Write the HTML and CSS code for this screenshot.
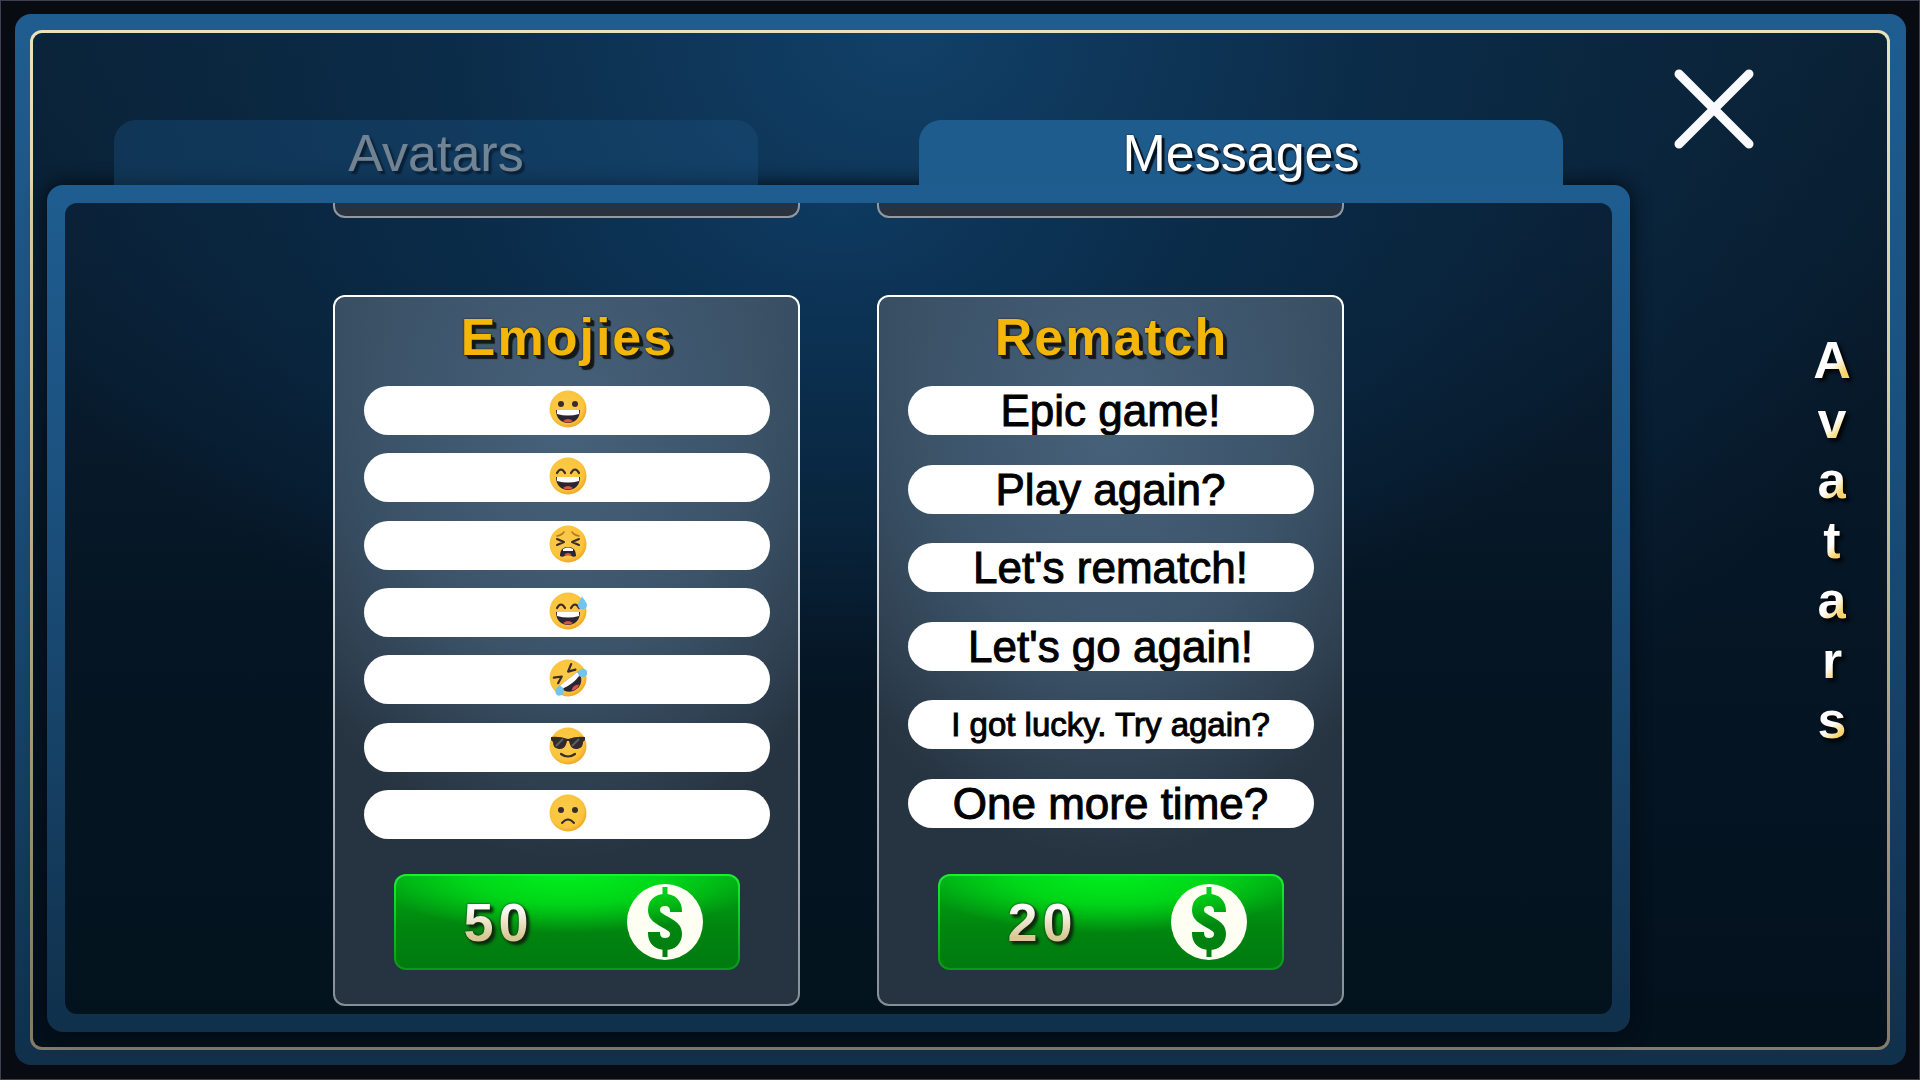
FILE: index.html
```html
<!DOCTYPE html>
<html lang="en">
<head>
  <meta charset="UTF-8">
  <meta name="viewport" content="width=device-width, initial-scale=1.0">
  <title>Avatars</title>
  <link rel="stylesheet" href="styles.css">
</head>
<body>
  <!-- shared drawings -->
  <svg class="defs" aria-hidden="true">
    <defs>
      <radialGradient id="skin" cx="45%" cy="42%" r="58%">
        <stop offset="0" stop-color="#fccb4b"/>
        <stop offset="0.8" stop-color="#fac43c"/>
        <stop offset="1" stop-color="#f0a727"/>
      </radialGradient>
      <mask id="dollar">
        <circle cx="38" cy="38" r="38" fill="#fff"/>
        <path d="M49 28V27C49 20 45 16 38 16S27 20 27 26C27 32 31 34 38 38S49 44 49 50C49 56 45 60 38 60S27 56 27 49V48" fill="none" stroke="#000" stroke-width="12"/>
        <path d="M38 3V16M38 60V73" stroke="#000" stroke-width="5"/>
      </mask>
      <symbol id="coin" viewBox="0 0 76 76">
        <rect width="76" height="76" fill="#fffef2" mask="url(#dollar)"/>
      </symbol>
      <symbol id="grin" viewBox="0 0 38 38">
        <path d="M7 20H31C31 28 26 33 19 33S7 28 7 20Z" fill="#2b2433"/>
        <path d="M8 20H30V24Q19 27 8 24Z" fill="#fff"/>
        <path d="M14 31Q19 27 24 31Q19 34 14 31Z" fill="#d4573f"/>
      </symbol>
      <symbol id="happyEyes" viewBox="0 0 38 38">
        <path d="M8 16Q12 9 16 16M22 16Q26 9 30 16" fill="none" stroke="#3a2c2e" stroke-width="2.2" stroke-linecap="round"/>
      </symbol>
    </defs>
  </svg>

  <div class="window">
    <div class="inner">
      <main class="shop">
        <div class="tabs" role="tablist">
          <button class="tab" role="tab" aria-selected="false">Avatars</button>
          <button class="tab active" role="tab" aria-selected="true">Messages</button>
        </div>
        <div class="panel">
          <div class="scroller">
            <div class="card-end"></div>
            <div class="card-end"></div>

            <section class="card">
              <h2>Emojies</h2>
              <ul class="messages emojis">
                <li>
                  <svg viewBox="0 0 38 38" role="img" aria-label="grinning">
                    <circle cx="19" cy="19" r="18.5" fill="url(#skin)"/>
                    <circle cx="12" cy="14" r="3" fill="#3a2c2e"/>
                    <circle cx="26" cy="14" r="3" fill="#3a2c2e"/>
                    <use href="#grin"/>
                  </svg>
                </li>
                <li>
                  <svg viewBox="0 0 38 38" role="img" aria-label="smiling">
                    <circle cx="19" cy="19" r="18.5" fill="url(#skin)"/>
                    <use href="#happyEyes"/>
                    <use href="#grin"/>
                  </svg>
                </li>
                <li>
                  <svg viewBox="0 0 38 38" role="img" aria-label="tired">
                    <circle cx="19" cy="19" r="18.5" fill="url(#skin)"/>
                    <path d="M8 11Q13 10 15 7M30 11Q25 10 23 7" fill="none" stroke="#b8741c" stroke-width="1.5" stroke-linecap="round"/>
                    <path d="M8 14L15 17L8 20M30 14L23 17L30 20" fill="none" stroke="#3a2c2e" stroke-width="2" stroke-linecap="round" stroke-linejoin="round"/>
                    <path d="M11 31C11 25 14 22 19 22S27 25 27 31C24 33 22 30 19 30S14 33 11 31Z" fill="#2b2433"/>
                    <path d="M14 24Q19 21 24 24V26H14Z" fill="#fff"/>
                    <path d="M15 30Q19 26 23 30Q19 31 15 30Z" fill="#d4573f"/>
                  </svg>
                </li>
                <li>
                  <svg viewBox="0 0 38 38" role="img" aria-label="sweating">
                    <circle cx="19" cy="19" r="18.5" fill="url(#skin)"/>
                    <use href="#happyEyes"/>
                    <use href="#grin"/>
                    <path d="M33 4C35 8 38 10 38 13A4.500 4.500 0 0 1 29 13C29 10 32 8 33 4Z" fill="#70c4ee"/>
                  </svg>
                </li>
                <li>
                  <svg viewBox="0 0 38 38" role="img" aria-label="rolling on the floor laughing">
                    <circle cx="19" cy="19" r="18.5" fill="url(#skin)"/>
                    <g transform="rotate(-38 19 19)">
                      <path d="M8 10L15 14L8 17M30 10L23 14L30 17" fill="none" stroke="#3a2c2e" stroke-width="2.2" stroke-linecap="round" stroke-linejoin="round"/>
                      <use href="#grin"/>
                      <path d="M8 20C2 19 -1 22 0 26C2 30 8 29 9 24Z" fill="#70c4ee"/>
                      <path d="M30 20C36 19 39 22 38 26C36 30 30 29 29 24Z" fill="#70c4ee"/>
                    </g>
                  </svg>
                </li>
                <li>
                  <svg viewBox="0 0 38 38" role="img" aria-label="cool">
                    <circle cx="19" cy="19" r="18.5" fill="url(#skin)"/>
                    <path d="M2 10Q10 9 19 12Q28 9 36 10V13L34 15C34 20 31 22 27 22S21 19 20 14H18C17 19 15 22 11 22S4 20 4 15L2 13Z" fill="#33292f"/>
                    <path d="M7 19L14 12M23 19L30 12" stroke="#566069" stroke-width="2"/>
                    <path d="M12 27Q19 32 26 27" fill="none" stroke="#3a2c2e" stroke-width="2.200" stroke-linecap="round"/>
                  </svg>
                </li>
                <li>
                  <svg viewBox="0 0 38 38" role="img" aria-label="sad">
                    <circle cx="19" cy="19" r="18.5" fill="url(#skin)"/>
                    <circle cx="12" cy="16" r="3" fill="#3a2c2e"/>
                    <circle cx="26" cy="16" r="3" fill="#3a2c2e"/>
                    <path d="M13 29Q19 22 25 29" fill="none" stroke="#3a2c2e" stroke-width="2" stroke-linecap="round"/>
                  </svg>
                </li>
              </ul>
              <button class="buy">
                <span class="price">50</span>
                <svg class="coin" aria-hidden="true"><use href="#coin"/></svg>
              </button>
            </section>

            <section class="card">
              <h2>Rematch</h2>
              <ul class="messages">
                <li>Epic game!</li>
                <li>Play again?</li>
                <li>Let's rematch!</li>
                <li>Let's go again!</li>
                <li class="small">I got lucky. Try again?</li>
                <li>One more time?</li>
              </ul>
              <button class="buy">
                <span class="price">20</span>
                <svg class="coin" aria-hidden="true"><use href="#coin"/></svg>
              </button>
            </section>
          </div>
        </div>
      </main>

      <aside class="side">
        <button class="close" aria-label="Close">
          <svg viewBox="0 0 78 78"><path d="M4 4L74 74M74 4L4 74" stroke="#f8fafe" stroke-width="9" stroke-linecap="round"/></svg>
        </button>
        <h1 class="title">
          <span>A</span><span>v</span><span>a</span><span>t</span><span>a</span><span>r</span><span>s</span>
        </h1>
      </aside>
    </div>
  </div>
</body>
</html>
```

FILE: styles.css
```css
* {
  box-sizing: border-box;
}
body {
  margin: 0;
  min-height: 100vh;
  display: flex;
  padding: 13px 13px 14px 14px;
  border: 1px solid #3c4150;
  background: #080b12;
  font-family: "Liberation Sans", Arial, sans-serif;
}
button {
  font-family: inherit;
  border: none;
  padding: 0;
  cursor: pointer;
}
h1, h2, ul {
  margin: 0;
  padding: 0;
}
.defs {
  position: absolute;
  width: 0;
  height: 0;
}

/* outer frame */
.window {
  flex: 1;
  display: flex;
  padding: 16px 16px 15px 15px;
  border-radius: 16px;
  background: linear-gradient(#1f5d90, #1b517f 35%, #10304b);
}
.inner {
  flex: 1;
  display: flex;
  border: 3px solid transparent;
  border-radius: 12px;
  background:
    radial-gradient(ellipse 58% 85% at 47% 0, #114068 0%, #0b2b47 45%, rgba(5, 22, 36, 0) 100%) padding-box,
    linear-gradient(#0a2032, #061727 45%, #03111d) padding-box,
    linear-gradient(#e9e2bd, #d8cb9c 35%, #857c68) border-box;
}
.shop {
  flex: 1;
  display: flex;
  flex-direction: column;
  padding: 87px 0 15px 14px;
}

/* tabs */
.tabs {
  position: relative;
  z-index: 1;
  display: flex;
  justify-content: space-between;
  padding: 0 67px;
}
.tab {
  width: 644px;
  height: 65px;
  border-radius: 22px 22px 0 0;
  background: #1a4f7d;
  color: #fff;
  font-size: 52px;
  line-height: 64px;
  text-shadow: 3px 3px 2px #06131f;
  opacity: 0.42;
}
.tab.active {
  background: #1f5c8e;
  opacity: 1;
  text-shadow: 0 0 2px #06131f, 3px 3px 1px #06131f;
}

.panel {
  flex: 1;
  display: flex;
  padding: 18px;
  border-radius: 16px;
  background: linear-gradient(#1f5d90, #1b517f 35%, #10304b);
  box-shadow: 0 0 20px #02080f;
}
.scroller {
  flex: 1;
  display: grid;
  grid-template-columns: 467px 467px;
  grid-template-rows: 15px 1fr;
  justify-content: center;
  gap: 77px;
  padding-bottom: 8px;
  border-radius: 12px;
  overflow: hidden;
  background:
    radial-gradient(ellipse 55% 60% at 50% 0, #0e3a60 0%, #0a2b48 45%, rgba(4, 20, 33, 0) 100%),
    linear-gradient(#0a2035, #051523 50%, #03131e);
}

/* cards */
.card-end {
  border: 2px solid #9299a0;
  border-top: none;
  border-radius: 0 0 12px 12px;
  background: #28333f;
}
.card {
  display: flex;
  flex-direction: column;
  align-items: center;
  padding: 11px 0 34px;
  border: 2px solid transparent;
  border-radius: 12px;
  background:
    radial-gradient(ellipse 70% 62% at 50% 18%, #46617a 0%, #3d556b 50%, rgba(38, 51, 64, 0) 100%) padding-box,
    linear-gradient(#34485a, #263340 60%) padding-box,
    linear-gradient(#fff, #e4e8ec 30%, #868e98) border-box;
}
.card h2 {
  padding-left: 2px;
  color: #f5b60a;
  font-size: 52px;
  line-height: 58px;
  letter-spacing: 2px;
  text-shadow: 0 0 2px #14191c, 1px 1px 0 #14191c, 3px 3px 0 #14191c, 4px 4px 1px #14191c;
}
.messages {
  width: 406px;
  height: 442px;
  margin-top: 20px;
  display: flex;
  flex-direction: column;
  justify-content: space-between;
  list-style: none;
}
.messages.emojis {
  height: 453px;
}
.messages li {
  height: 49px;
  border-radius: 25px;
  overflow: hidden;
  background: #fff;
  color: #000;
  font-size: 44px;
  line-height: 49px;
  text-align: center;
  -webkit-text-stroke: 1px #000;
}
.messages li.small {
  font-size: 33px;
}
.messages.emojis li {
  padding: 4px 0 0 2px;
}
.messages svg {
  display: block;
  width: 38px;
  height: 38px;
  margin: 0 auto;
}

.buy {
  width: 346px;
  height: 96px;
  margin-top: auto;
  padding: 0 35px 0 68px;
  display: flex;
  align-items: center;
  justify-content: space-between;
  border: 2px solid transparent;
  border-radius: 12px;
  background:
    radial-gradient(ellipse 58% 62% at 50% 0, #00ee1c 0%, rgba(0, 228, 26, 0.8) 50%, rgba(0, 150, 16, 0) 100%) padding-box,
    linear-gradient(#00a814, #00860f 55%, #007a10) padding-box,
    linear-gradient(#14f52e, #08981a) border-box;
}
.price {
  background: linear-gradient(#fff 25%, #d9c794 75%);
  -webkit-background-clip: text;
  background-clip: text;
  color: transparent;
  font-size: 54px;
  font-weight: bold;
  letter-spacing: 5px;
  filter: drop-shadow(0 0 1px #0c2c0e) drop-shadow(3px 3px 1px #0c2c0e);
}
.coin {
  width: 76px;
  height: 76px;
}

/* right side */
.side {
  width: 257px;
  display: flex;
  justify-content: space-between;
  padding: 0 36px 0 45px;
}
.close {
  align-self: flex-start;
  margin-top: 37px;
  background: none;
}
.close svg {
  display: block;
  width: 78px;
  height: 78px;
  overflow: visible;
}
.title {
  align-self: center;
  width: 38px;
  display: flex;
  flex-direction: column;
  align-items: center;
  font-size: 52px;
  line-height: 60px;
  filter: drop-shadow(3px 3px 2px #000);
}
.title span {
  background: linear-gradient(135deg, #fff 55%, #f9d26a 75%);
  -webkit-background-clip: text;
  background-clip: text;
  color: transparent;
}
```
